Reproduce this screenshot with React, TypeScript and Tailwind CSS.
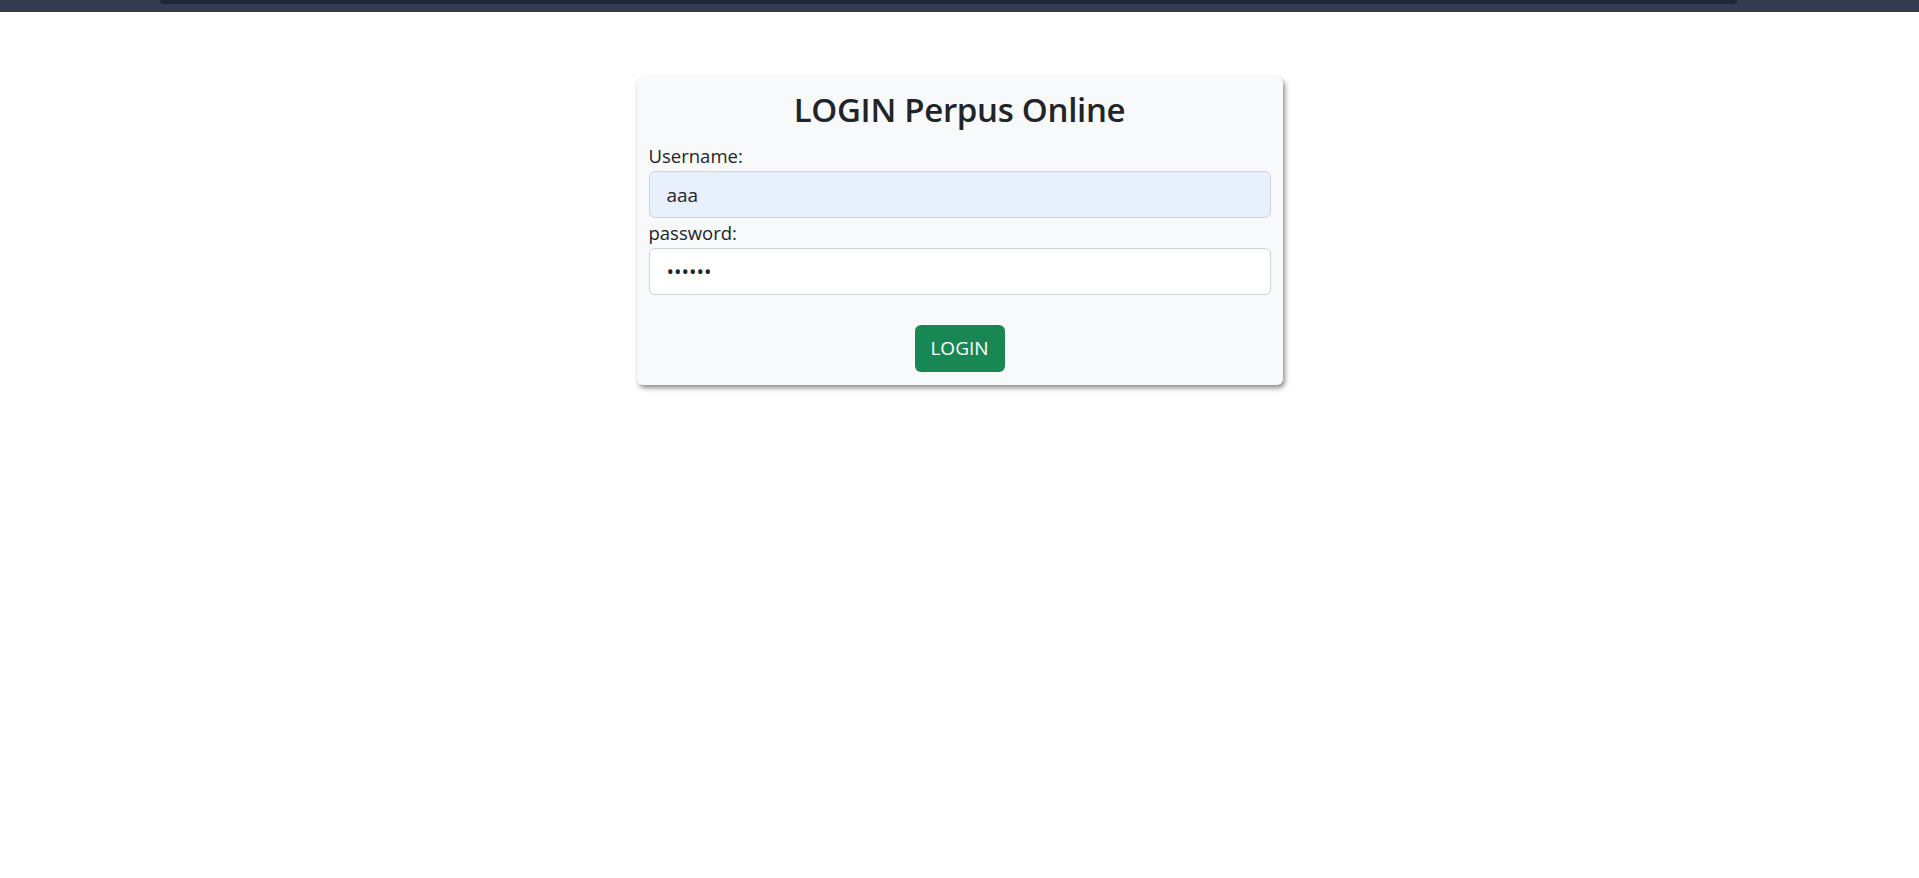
import React from "react";

export default function App() {
  return (
    <div className="min-h-screen bg-white text-[#212529] [font-family:'Open_Sans','Noto_Sans',sans-serif]">
      <div className="h-[12px] bg-[#353b4f] flex">
        <div className="ml-[160px] mr-[182px] flex-1 h-[4px] bg-[#1f2538] rounded-b-[6px]" />
      </div>
      <div className="flex justify-center pt-[65px]">
        <form
          className="w-[646px] bg-[#f8f9fa] rounded-[6px] shadow-[2px_3px_5px_rgba(0,0,0,0.45)] px-[12px] pt-[12px] pb-[13px]"
          onSubmit={(e) => e.preventDefault()}
        >
          <h3 className="text-center text-[33px] leading-[42px] font-semibold tracking-[-0.3px] mb-[10px]">
            LOGIN Perpus Online
          </h3>
          <label htmlFor="username" className="block text-[18.5px] leading-[30px]">
            Username:
          </label>
          <input
            id="username"
            type="text"
            defaultValue="aaa"
            readOnly
            className="block w-full h-[47px] px-[17px] text-[19px] rounded-[6px] border border-[#ced4da] bg-[#e8f0fe] text-[#212529] outline-none"
          />
          <label htmlFor="password" className="block text-[18.5px] leading-[30px]">
            password:
          </label>
          <input
            id="password"
            type="password"
            defaultValue="aaaaaa"
            readOnly
            className="block w-full h-[47px] px-[17px] text-[20px] rounded-[6px] border border-[#ced4da] bg-white text-[#212529] outline-none"
          />
          <div className="flex justify-center mt-[30px]">
            <button
              type="submit"
              className="w-[90px] h-[47px] rounded-[6px] bg-[#198754] text-white text-[19px]"
            >
              LOGIN
            </button>
          </div>
        </form>
      </div>
    </div>
  );
}
